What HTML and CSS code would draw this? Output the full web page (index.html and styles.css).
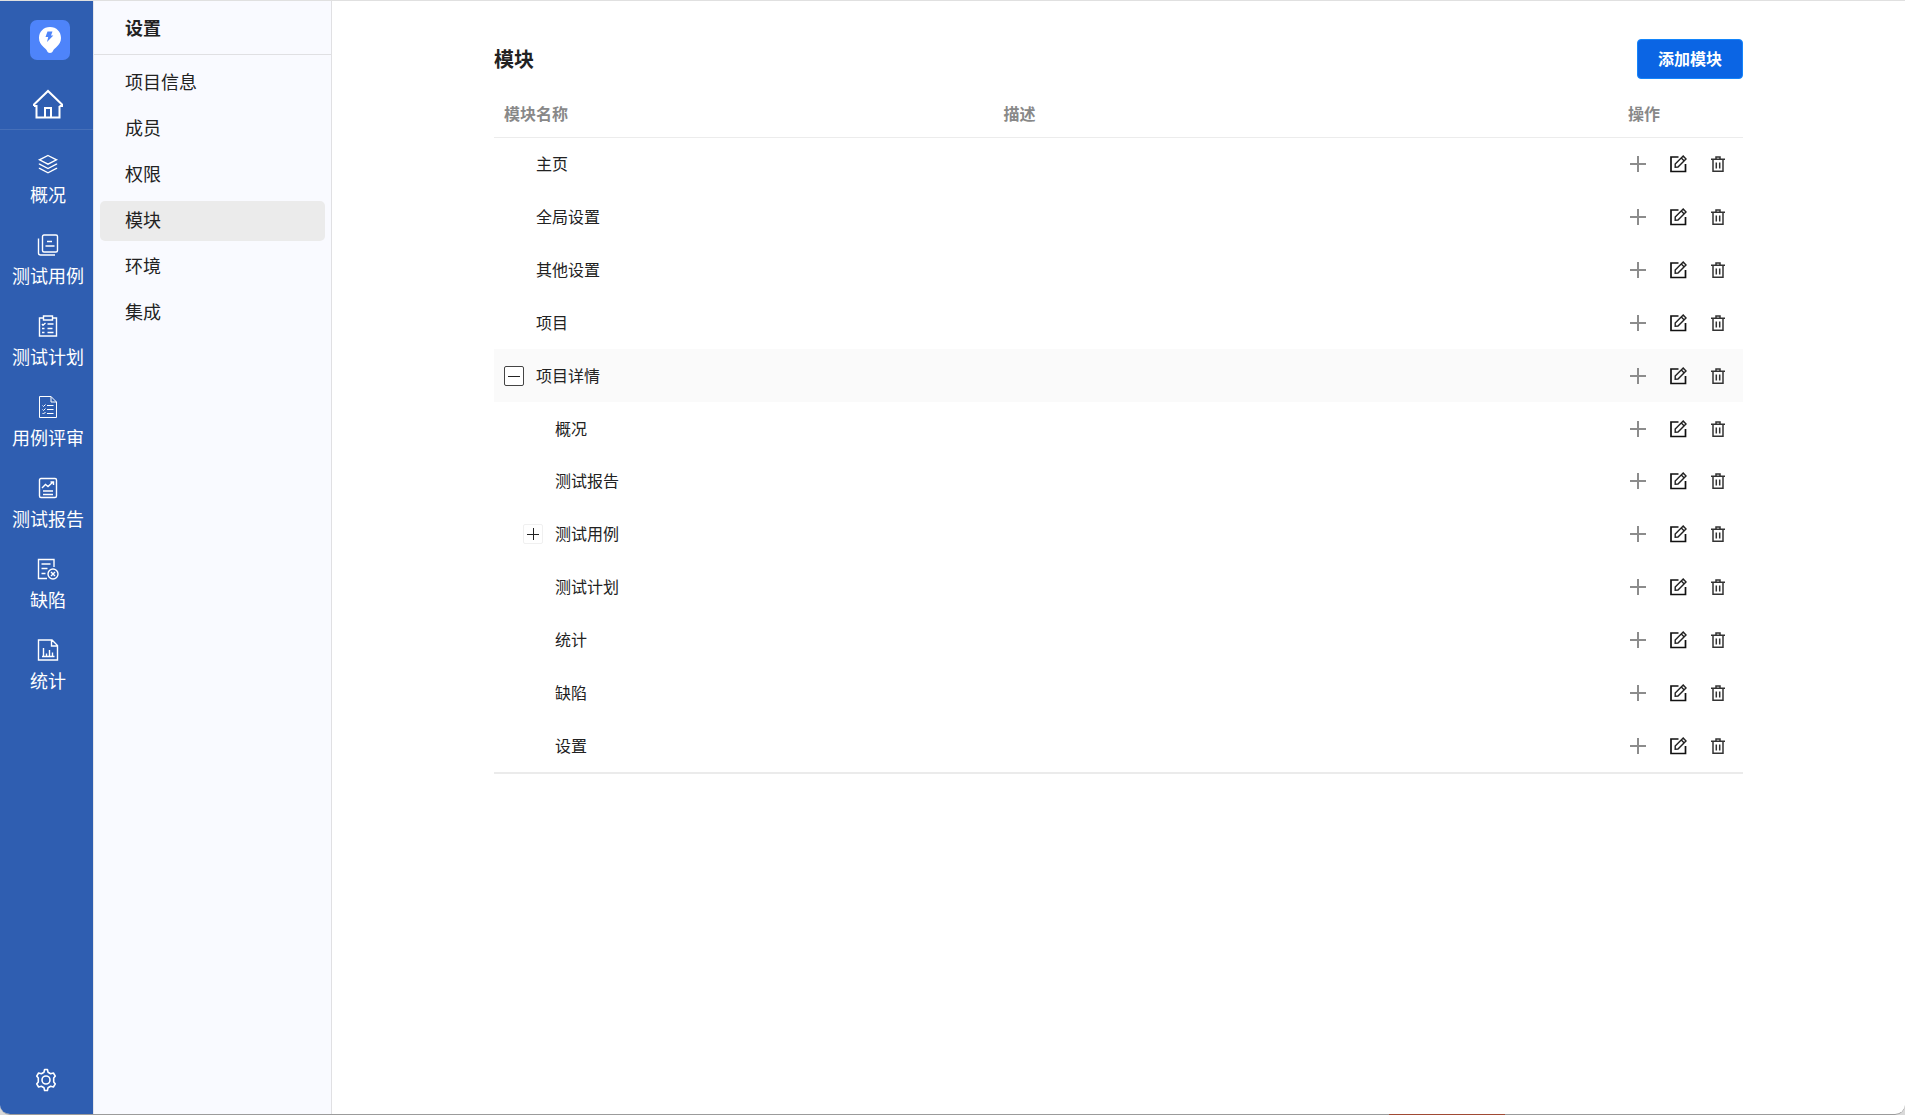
FILE: index.html
```html
<!DOCTYPE html>
<html lang="zh-CN">
<head>
<meta charset="utf-8">
<title>设置 - 模块</title>
<link rel="stylesheet" href="styles.css">
</head>
<body>
<svg class="sprite" aria-hidden="true">
  <symbol id="plus" viewBox="0 0 20 20"><path d="M10 2v16M2 10h16" stroke="#8c8c8c" stroke-width="2" fill="none"/></symbol>
  <symbol id="edit" viewBox="0 0 20 20"><path d="M10.500 3H3v14.500h14.500V10" stroke="#111" stroke-width="1.7" fill="none"/><path d="M7.200 13.200v-3.100l8-8 2.800 2.800-8 8.200zM13.300 4l2.700 2.700" stroke="#222" stroke-width="1.4" fill="none"/></symbol>
  <symbol id="trash" viewBox="0 0 20 20"><path d="M3 5.200h14M8 5V3h4v2M5 6v11.300h10V6M8.300 8.500v6M11.700 8.500v6" stroke="#333" stroke-width="1.5" fill="none"/></symbol>
</svg>
<div class="window">
  <nav class="rail" aria-label="主导航">
    <div class="rail-top">
      <a class="logo" href="#" aria-label="首页标志">
        <svg width="40" height="40" viewBox="0 0 40 40"><path d="M20 7C13.500 7 9 11.700 9 18c0 4 1.800 6.500 4.500 9 1.500 1.400 2.500 2 3.300 3.600C17.700 32.400 18.500 33 20 33s2.300-.6 3.200-2.400c.8-1.600 1.800-2.200 3.300-3.600 2.700-2.500 4.500-5 4.500-9C31 11.700 26.500 7 20 7z" fill="#fff"/><path d="M17.500 11.500h5l-1.500 4h2.300L17 22l1.200-5h-2.700z" fill="#4e84fa"/></svg>
      </a>
      <a class="home" href="#" aria-label="主页">
        <svg width="32" height="32" viewBox="0 0 32 32" fill="none" stroke="#fff" stroke-width="2"><path d="M2 18V16.500L16 3 30 16.500V18h-2.500M2 18h2.500v11.500h23V18"/><path d="M13 29.500V20h6v9.500"/></svg>
      </a>
    </div>
    <ul class="rail-list">
      <li><a href="#"><svg class="ri" viewBox="0 0 22 22"><path d="M11 2.500l8.500 4.300-8.500 4.400-8.500-4.400zM2.500 10.500v.6l8.500 4.400 8.500-4.400v-.6M2.500 14.800v.6l8.500 4.400 8.500-4.400v-.6"/></svg>概况</a></li>
      <li><a href="#"><svg class="ri" viewBox="0 0 22 22"><path d="M7 1h12q1.500 0 1.500 1.500v14q0 1.500-1.500 1.500H7q-1.500 0-1.500-1.500v-14Q5.500 1 7 1zM1.500 4.500V19q0 2 2 2H18M10 7.500h5M8.500 12h9"/></svg>测试用例</a></li>
      <li><a href="#"><svg class="ri" viewBox="0 0 22 22"><path d="M6.500 3H2.500v18h17V3h-4M6.500 1h9v4h-9zM5 9l1 1.200L8.500 8M10.500 9h6M5 13.500h2.500M10.500 13.500h5M5 17.500h2.500M10.500 17.500h6"/></svg>测试计划</a></li>
      <li><a href="#"><svg class="ri thin" viewBox="0 0 22 22"><path d="M2.500.5H14l5.500 5.500v15.500h-17zM14 .5V6h5.500M5.500 9.500l1 1L8.500 8.500M10 9.500h6.500M5.500 13.500l1 1 2-2M10 13.500h6.500M5.500 17l1 1 2-2M10 17.500h6.500"/></svg>用例评审</a></li>
      <li><a href="#"><svg class="ri" viewBox="0 0 22 22"><path d="M4 1.500h14q1.500 0 1.500 1.500v16q0 1.500-1.500 1.500H4q-1.500 0-1.500-1.500V3Q2.500 1.500 4 1.500zM5 11l3.500-3.500L11 9.500l5-4.500M13.500 5H16.500v3M6 14h10M6 17.500h10"/></svg>测试报告</a></li>
      <li><a href="#"><svg class="ri" viewBox="0 0 22 22"><path d="M17 9V1.500H1.500v19H10M4.500 6h9M4.500 10.500h6M4.500 15.500h4"/><circle cx="16" cy="16" r="5"/><path d="M14 14l4 4M18 14l-4 4"/></svg>缺陷</a></li>
      <li><a href="#"><svg class="ri" viewBox="0 0 22 22"><path d="M1.500 1H15l5.500 5.500V21h-19zM14.500 1v6h6M5 17.500h12.500M6.500 17.500V9M9.500 17.500v-3M12.500 17.500V11M15.500 17.500v-4"/></svg>统计</a></li>
    </ul>
    <a class="gear" href="#" aria-label="设置">
      <svg width="24" height="24" viewBox="0 0 24 24" fill="none" stroke="#fff" stroke-width="1.6"><path d="M10 4.200 10.600 1.500h2.800L14 4.200l2.600 1.500 2.800-.7 1.900 3.100-1.600 2v3.800l1.600 2-1.900 3.100-2.800-.7L14 19.800l-.6 2.700h-2.800l-.6-2.700-2.600-1.500-2.800.7-1.900-3.100 1.600-2v-3.800l-1.600-2L4.600 5l2.800.7z" stroke-linejoin="round"/><circle cx="12" cy="12" r="4"/></svg>
    </a>
  </nav>
  <aside class="side">
    <h2>设置</h2>
    <ul>
      <li><a href="#">项目信息</a></li>
      <li><a href="#">成员</a></li>
      <li><a href="#">权限</a></li>
      <li><a class="on" href="#" aria-current="page">模块</a></li>
      <li><a href="#">环境</a></li>
      <li><a href="#">集成</a></li>
    </ul>
  </aside>
  <main>
    <header>
      <h1>模块</h1>
      <button class="add" type="button">添加模块</button>
    </header>
    <table>
      <thead><tr><th class="c-name">模块名称</th><th class="c-desc">描述</th><th class="c-op">操作</th></tr></thead>
      <tbody id="rows"></tbody>
    </table>
  </main>
</div>
<script src="app.js"></script>
</body>
</html>
```
FILE: styles.css
```css
* { box-sizing: border-box; }
body {
  margin: 0;
  background: #d9d9d9;
  color: #222;
  font-family: "Noto Sans CJK SC", sans-serif;
  font-size: 16px;
  line-height: 24px;
}
ul { margin: 0; padding: 0; list-style: none; }
a { color: inherit; text-decoration: none; }
h1, h2 { margin: 0; }
button { font: inherit; color: inherit; cursor: pointer; }
svg { display: block; }
.sprite { display: none; }

.window {
  display: flex;
  min-height: 100vh;
  overflow: hidden;
  background: #fff;
  border-top: 1px solid #e0e0e0;
  border-bottom: 1px solid #9b9b9b;
  border-radius: 0 0 10px 10px;
}
/* strip of the desktop showing under the window edge */
body::after {
  content: "";
  position: absolute;
  bottom: 0;
  left: 1389px;
  width: 116px;
  height: 1px;
  background: #a04a34;
}

.rail {
  display: flex;
  flex-direction: column;
  width: 93px;
  flex: none;
  background: #2f5eb1;
  color: #fff;
  font-size: 18px;
}
.rail-top {
  display: flex;
  flex-direction: column;
  gap: 28px;
  padding: 19px 0 9px 30px;
  border-bottom: 1px solid #456fb9;
}
.logo { width: 40px; height: 40px; border-radius: 7px; background: #4e84fa; }
.home { width: 32px; margin-left: 2px; }
.rail-list { padding-top: 23px; padding-left: 3px; }
.rail-list li { height: 81px; }
.rail-list a {
  display: flex;
  flex-direction: column;
  align-items: center;
  gap: 7px;
  white-space: nowrap;
}
.ri { width: 22px; height: 22px; fill: none; stroke: #fff; stroke-width: 1.4; }
.thin { stroke-width: 1; }
.gear { margin-top: auto; padding: 0 0 22px 34px; }

.side {
  width: 239px;
  flex: none;
  background: #f9faff;
  border-left: 1px solid #e4e5ea;
  border-right: 1px solid #e0e0e3;
  font-size: 18px;
}
.side h2 {
  height: 54px;
  padding: 0 31px;
  border-bottom: 1px solid #e0e0e3;
  font-size: 18px;
  line-height: 52px;
}
.side ul {
  display: flex;
  flex-direction: column;
  gap: 6px;
  padding: 8px 6px;
}
.side li a {
  display: block;
  padding: 0 25px 4px;
  border-radius: 5px;
  line-height: 36px;
}
.side .on { background: #ebebeb; }

main { flex: 1; padding: 38px 162px; }
header { display: flex; align-items: center; justify-content: space-between; }
h1 { font-size: 20px; }
.add {
  height: 40px;
  padding: 0 20px 2px;
  border: 1px solid #1485fb;
  border-radius: 4px;
  background: #0b65e4;
  color: #fff;
  font-weight: 700;
  line-height: 24px;
}
table {
  width: 100%;
  height: 683px;
  margin-top: 12px;
  border-collapse: separate;
  border-spacing: 0;
  table-layout: fixed;
  border-bottom: 2px solid #ebebeb;
}
.c-name { width: 40%; }
.c-desc { width: 50%; }
.c-op { width: 10%; }
th {
  height: 47px;
  padding: 0 10px 2px;
  border-bottom: 1px solid #ececec;
  color: #888;
  text-align: left;
}
td { padding: 0 10px; }
.hover td { background: #fafafa; }
.name { display: flex; align-items: center; gap: 12px; }
.name span { padding-bottom: 2px; }
.child { padding-left: 19px; }
.slot { width: 20px; height: 20px; }
.toggle { padding: 3px; background: #fff; border: 1px solid #f0f0f0; border-radius: 2px; }
.open { border-color: #444; }
.ops { display: flex; gap: 20px; }
.ops button { padding: 0; border: 0; background: none; }
.ops svg { width: 20px; height: 20px; }
```
FILE: app.js
```js
const modules = [
  ["主页"], ["全局设置"], ["其他设置"], ["项目"], ["项目详情", 0, "open"],
  ["概况", 1], ["测试报告", 1], ["测试用例", 1, "closed"], ["测试计划", 1],
  ["统计", 1], ["缺陷", 1], ["设置", 1]
];
const toggle = state => state
  ? `<button type="button" class="slot toggle ${state}" aria-label="展开或收起"><svg width="12" height="12" viewBox="0 0 12 12"><path d="M0 6.500h12${state === "closed" ? "M6.500 0v12" : ""}" stroke="#222"/></svg></button>`
  : `<div class="slot"></div>`;
const action = (icon, label) =>
  `<button type="button" aria-label="${label}"><svg><use href="#${icon}"/></svg></button>`;
document.getElementById("rows").innerHTML = modules.map(([name, child, state]) => `
  <tr class="${state === "open" ? "hover" : ""}">
    <td><div class="name ${child ? "child" : ""}">${toggle(state)}<span>${name}</span></div></td>
    <td></td>
    <td><div class="ops">${action("plus", "添加")}${action("edit", "编辑")}${action("trash", "删除")}</div></td>
  </tr>`).join("");
```
